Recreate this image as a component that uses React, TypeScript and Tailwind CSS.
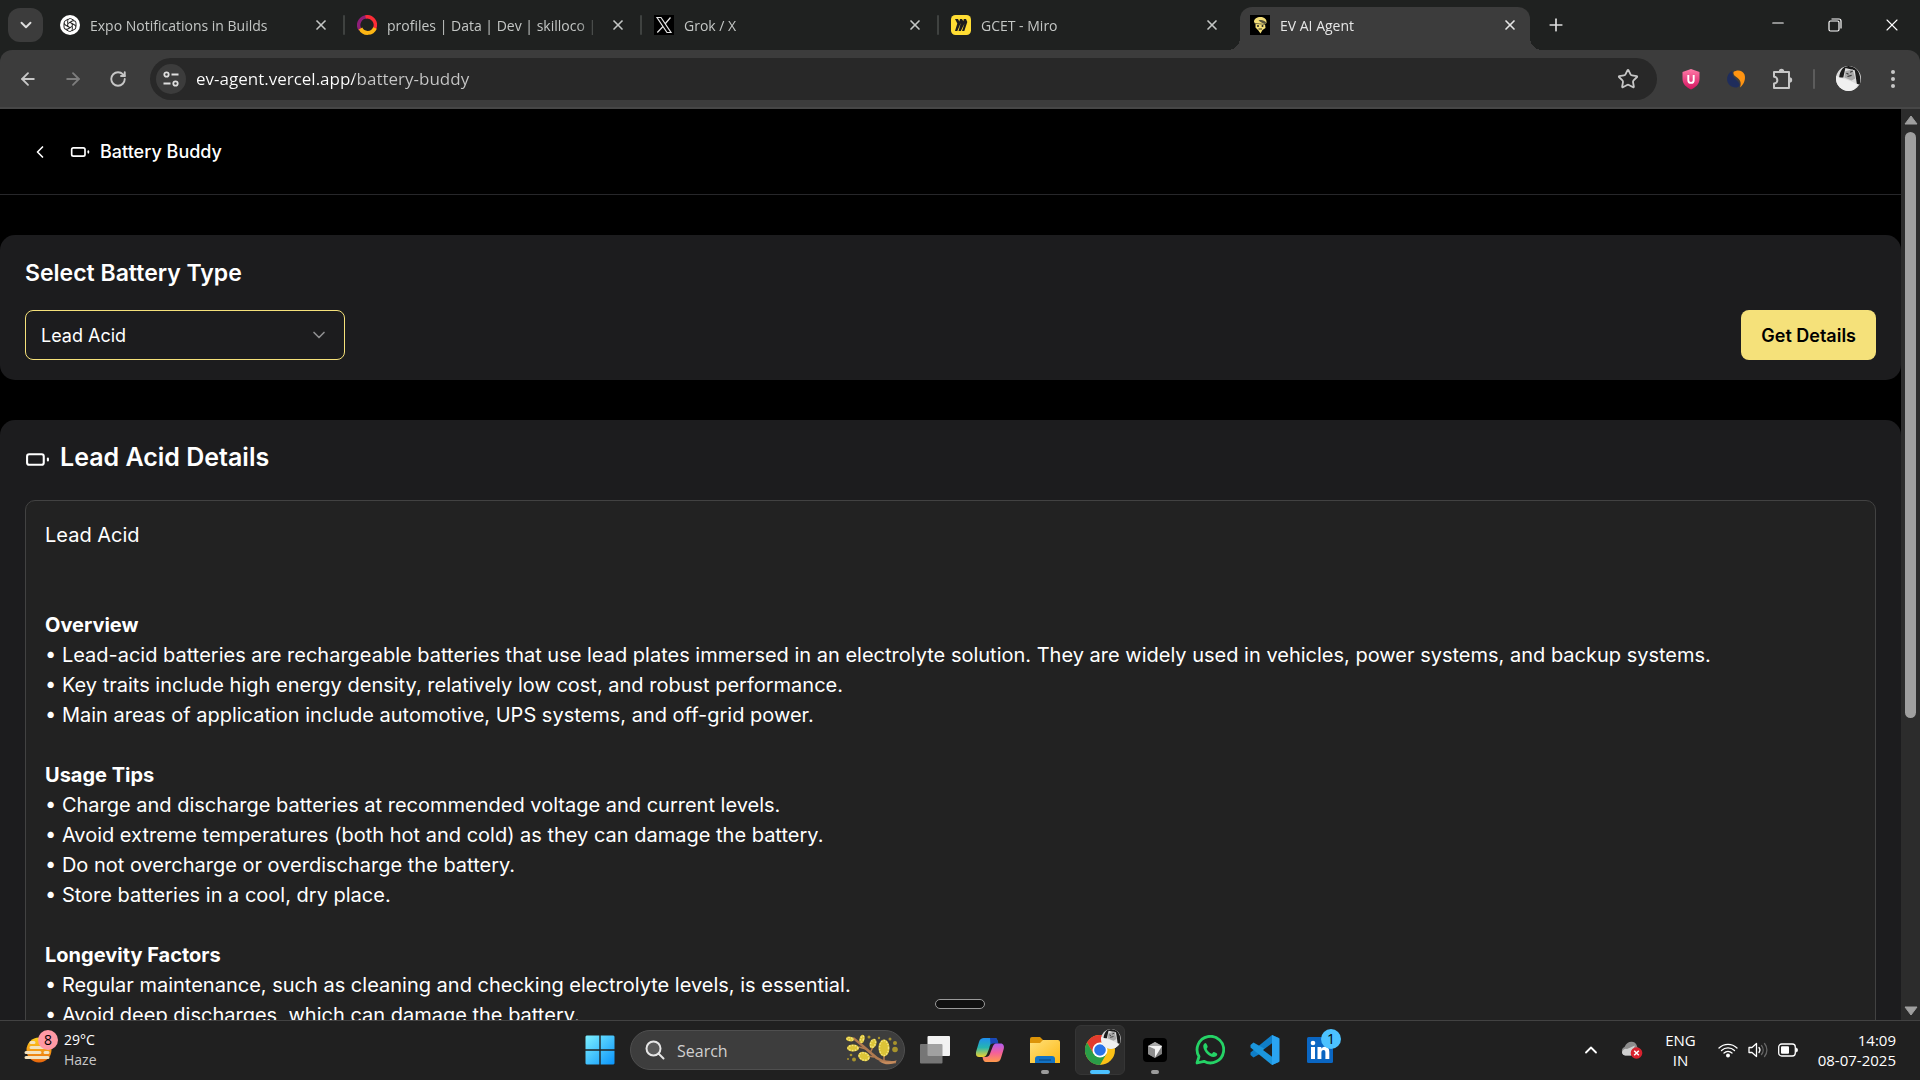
import React from "react";
import { ArrowLeft, ArrowRight, ChevronDown, ChevronLeft, ChevronUp, Minus, Plus, RotateCw, Star, X } from "lucide-react";

function OpenAiIcon() {
  return (
    <svg viewBox="0 0 20 20" className="size-5">
      <circle cx="10" cy="10" r="10" fill="#fff" />
      <g fill="none" stroke="#222" strokeWidth="1">
        {[0, 60, 120, 180, 240, 300].map((a) => (
          <path key={a} transform={`rotate(${a} 10 10)`} d="M10 7.4 L7.7 8.7 V5.6 A2.5 2.5 0 0 1 11.6 4 L14.2 5.5" />
        ))}
      </g>
    </svg>
  );
}

function RingIcon() {
  return (
    <svg viewBox="0 0 20 20" className="size-5" fill="none" strokeWidth="3.400">
      <path d="M10.500 1.900A8.200 8.200 0 0 0 3 14.500" stroke="#8e1f78" />
      <path d="M8.500 1.900A8.200 8.200 0 0 1 17.500 13.500" stroke="#fb2c36" />
      <path d="M3.500 13.500A8 8 0 0 0 18 13" stroke="#fcb614" strokeWidth="4" />
    </svg>
  );
}

function XLogo() {
  return (
    <svg viewBox="0 0 20 20" className="size-5">
      <rect width="20" height="20" fill="#000" />
      <path d="M3 2.500H7L17 17.500H13Z M16.500 2.500L11 9M9 11.500L3.300 17.500" fill="none" stroke="#e4e4e4" strokeWidth="1.200" />
    </svg>
  );
}

function MiroIcon() {
  return (
    <svg viewBox="0 0 20 20" className="size-5">
      <rect width="20" height="20" rx="4.500" fill="#ffdd33" />
      <path
        d="M4 4H7L8.300 6.500L9 4H11L12.300 6.200L12.800 4H15L16.300 7L13.300 16H11L13.500 8.500L9.800 16H7.500L9.800 8L6.300 16H4L6.300 8.500Z"
        fill="#1c1c1e"
      />
    </svg>
  );
}

function AgentIcon() {
  return (
    <svg viewBox="0 0 20 20" className="size-5">
      <rect width="20" height="20" fill="#000" />
      <path d="M4 7C4 3.500 7 2 10.500 2C14.500 2 17 4.500 16.500 8L15 9L15.500 13L12.500 15L10.500 18.500L8 15L5.500 12.500L5.500 9Z" fill="#f3de78" />
      <path d="M8.500 5.500C11 4.500 14.500 5 16.300 8L15 9C13 8.500 11 7.500 8.500 5.500Z" fill="#55523c" />
      <path d="M4.500 8.500C8 8.500 11 9 15 9.500" stroke="#55523c" strokeWidth=".8" fill="none" />
      <circle cx="8" cy="11" r="1" fill="#222" />
      <circle cx="12.500" cy="11" r="1" fill="#222" />
      <path d="M8.500 14H12" stroke="#222" strokeWidth=".9" />
    </svg>
  );
}

function Avatar({ className }: { className: string }) {
  return (
    <svg viewBox="0 0 24 24" className={className}>
      <defs>
        <clipPath id="face">
          <circle cx="12" cy="12" r="12" />
        </clipPath>
      </defs>
      <g clipPath="url(#face)">
        <rect width="24" height="24" fill="#dcdcdc" />
        <path d="M3 11C4 4 7 0 12 0C19 0 25 6 23 18L20 17L18 4L9 2L7 11Z" fill="#1c1c1c" />
        <path d="M9 5L16 3L18.500 12L15 14L8 11Z" fill="#a8a8a8" />
        <path d="M10 7L12 8M13.500 6L16 5M11 10L15 9" stroke="#333" strokeWidth="1" />
        <path d="M0 9C3 12 12 12 21 18L17 24H0Z" fill="#f0f0f0" />
      </g>
    </svg>
  );
}

function SiteInfoIcon() {
  return (
    <svg viewBox="0 0 18 18" className="size-[18px]" fill="none" stroke="#dedede" strokeWidth="1.800">
      <circle cx="4.500" cy="4.500" r="2.200" />
      <path d="M9.500 4.500H16.500M1.500 13.500H8.500" />
      <circle cx="13.500" cy="13.500" r="2.200" />
    </svg>
  );
}

function ShieldIcon() {
  return (
    <svg viewBox="0 0 20 22" className="h-[22px] w-5">
      <defs>
        <linearGradient id="shield" x1="0" y1="0" x2="0" y2="1">
          <stop offset="0" stopColor="#ff7aa8" />
          <stop offset="1" stopColor="#d4145f" />
        </linearGradient>
      </defs>
      <path d="M10 1L18.500 4V11C18.500 16 14.500 19.500 10 21.500C5.500 19.500 1.500 16 1.500 11V4Z" fill="url(#shield)" />
      <path d="M7.300 7V12.200A2.700 2.700 0 0 0 12.700 12.200V7" fill="none" stroke="#fff" strokeWidth="1.900" />
    </svg>
  );
}

function SwirlIcon() {
  return (
    <svg viewBox="0 0 20 20" className="size-5">
      <path d="M6 2C.5 5 -.5 12 3.500 16C6.500 19 12 19.500 13.500 16.500C14.500 13 8.500 10.500 7 7C6.300 5 6.500 3 6 2Z" fill="#1f2d5c" />
      <path d="M7.500 3C11 .5 16.500 1 18.500 5.500C20 10 18 15.500 14 18.500C15.500 14 14.500 11 11 8.500C8.500 7 7 5.500 7.500 3Z" fill="#ff9412" />
    </svg>
  );
}

function PuzzleIcon() {
  return (
    <svg viewBox="0 0 24 24" className="size-6">
      <path d="M4 5H19V21H4V16.500A3.300 3.300 0 0 0 4 9.800Z" fill="none" stroke="#c7c7c7" strokeWidth="2" strokeLinejoin="round" />
      <path d="M8.800 4.500A2.700 2.700 0 0 1 14.200 4.500ZM19.500 10.300A2.700 2.700 0 0 1 19.500 15.700Z" fill="#c7c7c7" />
    </svg>
  );
}

function BatteryIcon({ className }: { className: string }) {
  return (
    <svg viewBox="0 0 24 24" className={className} fill="none" stroke="#fff" strokeWidth="2" strokeLinecap="round">
      <rect x="2" y="7" width="16" height="10" rx="2" />
      <path d="M22 11V13" />
    </svg>
  );
}

function HazeIcon() {
  return (
    <svg viewBox="0 0 32 32" className="size-8">
      <defs>
        <linearGradient id="sun" x1="0" y1="0" x2="0" y2="1">
          <stop offset="0" stopColor="#ffd21f" />
          <stop offset="1" stopColor="#e8660c" />
        </linearGradient>
      </defs>
      <circle cx="15" cy="16" r="12.500" fill="url(#sun)" />
      <g stroke="#f3e3c0" strokeWidth="3" strokeLinecap="round">
        <path d="M7 8.500H10M7 13.500H25M2 18.500H16M21 18.500H24M2 23.500H24" />
      </g>
    </svg>
  );
}

function WindowsIcon() {
  return (
    <svg viewBox="0 0 30 30" className="size-[30px]">
      <defs>
        <linearGradient id="win" x1="0" y1="0" x2="1" y2="1">
          <stop offset="0" stopColor="#7df0ff" />
          <stop offset="1" stopColor="#0a94fb" />
        </linearGradient>
      </defs>
      <path d="M1.500 .5H14.300V14.300H.5V1.500ZM15.700 .5H28.500L29.500 1.500V14.300H15.700ZM.5 15.700H14.300V29.500H1.500L.5 28.500ZM15.700 15.700H29.500V28.500L28.500 29.500H15.700Z" fill="url(#win)" />
    </svg>
  );
}

function BranchArt() {
  const pods: number[][] = [
    [4, 5, 4, 2.3, 10], [16, 5, 2.5, 4.2, 15], [7, 14, 6, 3.6, 0], [27, 9.5, 3.3, 5, 20], [18, 22.5, 6, 4.5, 20], [38, 14, 5.5, 8.5, 0],
  ];
  const dots: number[][] = [[23, 3, 1.5], [44, 5, 1.5], [49, 9, 2], [49, 15.5, 2.8], [8, 25.5, 2], [2, 25, 1], [33, 4, 1.2], [5, 21, 1.3]];
  return (
    <svg viewBox="0 0 54 32" className="h-8 w-[54px]">
      <g fill="none" stroke="#b07a50" strokeWidth="1.500">
        <path d="M7 4C14 9 20 15 26 20C32 26 38 29 50 28" strokeWidth="2.600" />
        <path d="M24 19L27 13M13 13L20 15M38 27V20M22 22L28 23" />
      </g>
      <path d="M33 27C39 28 44 28 51 26.500C48 31 39 32 33 27Z" fill="#c58b5d" />
      {pods.map(([cx, cy, rx, ry, a], i) => (
        <g key={i} transform={`rotate(${a} ${cx} ${cy})`}>
          <ellipse cx={cx} cy={cy} rx={rx} ry={ry} fill="#dcc437" />
          <ellipse cx={cx} cy={cy} rx={rx - 1} ry={ry - 1} fill="none" stroke="#f6e685" strokeWidth="1.400" strokeDasharray="1.400 1.400" />
        </g>
      ))}
      {dots.map(([cx, cy, r], i) => (
        <circle key={i} cx={cx} cy={cy} r={r} fill="#a8932c" />
      ))}
    </svg>
  );
}

function TaskViewIcon() {
  return (
    <svg viewBox="0 0 30 30" className="size-[30px]">
      <rect x="7.500" y="1" width="22.500" height="20" rx="1" fill="#f2f2f2" />
      <rect x="0" y="9" width="22.500" height="19.500" rx="1" fill="#8c8c8c" fillOpacity=".8" />
    </svg>
  );
}

function CopilotIcon() {
  return (
    <svg viewBox="0 0 30 30" className="size-[30px]">
      <defs>
        <linearGradient id="copL" x1="0" y1="0" x2="0" y2="1">
          <stop offset="0" stopColor="#1f8df0" />
          <stop offset=".5" stopColor="#26b5b0" />
          <stop offset="1" stopColor="#f3d22c" />
        </linearGradient>
        <linearGradient id="copR" x1="0" y1="0" x2="0" y2="1">
          <stop offset="0" stopColor="#b05cf0" />
          <stop offset=".5" stopColor="#f4609a" />
          <stop offset="1" stopColor="#ff9a4a" />
        </linearGradient>
      </defs>
      <path d="M9 3H20C22 3 22.500 5 23 8H18C15 8 15 11 14 14L12 19C11 21 10 22 8 22H4C1 22 .5 19 1.300 16L4 7C5 4 6.500 3 9 3Z" fill="url(#copL)" />
      <path d="M15 3H20C22 3 22.500 5 23.500 8.500H18.500C16.500 8.500 16 9 15.500 10Z" fill="#1a48b8" />
      <path d="M21 27H11C9 27 8 25 7.500 22H11C14 22 15 19 16 16L18 11C19 9 20 8.500 22 8.500H25.500C28.500 8.500 29.500 11 28.700 14L26 23C25 26 23.500 27 21 27Z" fill="url(#copR)" />
    </svg>
  );
}

function FolderIcon() {
  return (
    <svg viewBox="0 0 30 30" className="size-[30px]">
      <defs>
        <linearGradient id="fold" x1="0" y1="0" x2="1" y2="1">
          <stop offset="0" stopColor="#ffe07a" />
          <stop offset="1" stopColor="#fdb915" />
        </linearGradient>
      </defs>
      <path d="M0 4A2 2 0 0 1 2 2H10L13 5V8H0Z" fill="#dc9408" />
      <path d="M0 8H10L13 5H28A2 2 0 0 1 30 7V28H0Z" fill="url(#fold)" />
      <path d="M5 28V24A3 3 0 0 1 8 21H22A3 3 0 0 1 25 24V28Z" fill="#1272c4" />
      <path d="M9 25H21" stroke="#0a4a86" strokeWidth="1.200" />
    </svg>
  );
}

function ChromeIcon() {
  return (
    <svg viewBox="0 0 30 30" className="size-[30px]">
      <circle cx="15" cy="15" r="15" fill="#fbc116" />
      <path d="M2 7.500A15 15 0 0 1 28 7.500H15L8.500 18.700Z" fill="#e33b2e" />
      <path d="M2 7.500A15 15 0 0 0 15 30L21.500 18.700L8.500 18.700Z" fill="#2a9d48" />
      <circle cx="15" cy="15" r="7.500" fill="#fff" />
      <circle cx="15" cy="15" r="5.800" fill="#2a73e8" />
    </svg>
  );
}

function CursorIcon() {
  return (
    <svg viewBox="0 0 24 24" className="size-6">
      <rect width="24" height="24" rx="4" fill="#000" />
      <path d="M12 4L19 8V16L12 20L5 16V8Z" fill="#7f7f7f" />
      <path d="M12 4L19 8L12 12L5 8Z" fill="#a9a9a9" />
      <path d="M5 8L12 12V20L5 16Z" fill="#8f8f8f" />
      <path d="M5 8H19L12 19.500V11Z" fill="#f4f4f4" />
    </svg>
  );
}

function WhatsAppIcon() {
  return (
    <svg viewBox="0 0 30 30" className="size-[30px]">
      <path d="M2 28L4 21.500A13.300 13.300 0 1 1 9 26.300Z" fill="none" stroke="#25d366" strokeWidth="2.800" strokeLinejoin="round" />
      <path d="M10.500 8C9 8.500 8 10 8.300 12C9 17 14 21.500 18.500 22C20.500 22 22 21 22.300 19.200C22.300 18.300 19.500 17 18.700 17C18 17 17.500 18.700 16.700 18.700C14.500 18 12.500 16 11.700 14C11.500 13.300 12.800 12.500 12.700 11.700C12.300 10.500 11.500 8 10.500 8Z" fill="#25d366" />
    </svg>
  );
}

function VsCodeIcon() {
  return (
    <svg viewBox="0 0 30 30" className="size-[30px]">
      <path d="M22 0L29 3V8L3.500 22.500L.5 20V17.500Z" fill="#0f7ec8" />
      <path d="M22 30L29 27V22L3.500 7.500L.5 10V12.500Z" fill="#1b96dd" />
      <path d="M22 0L29.500 3.500V26.500L22 30Z" fill="#2aa4f2" />
      <path d="M22 8.300V21.700L13 15Z" fill="#202020" />
    </svg>
  );
}

function LinkedInIcon() {
  return (
    <svg viewBox="0 0 26 26" className="size-[26px]">
      <rect width="26" height="26" rx="1.500" fill="#0a66c2" />
      <circle cx="6" cy="6" r="2.300" fill="#fff" />
      <path d="M4 10H8V22H4ZM10.500 10H14.300V11.700C15.300 10.200 16.500 9.700 18 9.700C21.300 9.700 22.300 12 22.300 15V22H18.400V15.700C18.400 14 18 13 16.600 13C15 13 14.400 14.200 14.400 15.800V22H10.500Z" fill="#fff" />
    </svg>
  );
}

function CloudErrorIcon() {
  return (
    <svg viewBox="0 0 22 18" className="h-[18px] w-[22px]">
      <path d="M4.500 14.500A4.500 4.500 0 0 1 3.500 6C5.500 2 8 .5 11 .8C14 1 16 3.500 16 5.500L18 9V14.500Z" fill="#8d8d8d" />
      <path d="M1 12A4 4 0 0 1 6 8L14 4.500L10 14.500H4A3.500 3.500 0 0 1 1 12Z" fill="#cfcfcf" />
      <circle cx="15.500" cy="12" r="5.800" fill="#d8222e" />
      <path d="M13.200 9.700L17.800 14.300M17.800 9.700L13.200 14.300" stroke="#fff" strokeWidth="1.500" />
    </svg>
  );
}

function WifiIcon() {
  return (
    <svg viewBox="0 0 20 16" className="h-4 w-5" fill="none" stroke="#fff" strokeWidth="1.300" strokeLinecap="round">
      <path d="M1 6A13 13 0 0 1 19 6M3.500 8.500A9.500 9.500 0 0 1 16.500 8.500M6 11A6 6 0 0 1 14 11" />
      <circle cx="10" cy="13.500" r="1.300" fill="#fff" />
    </svg>
  );
}

function VolumeIcon() {
  return (
    <svg viewBox="0 0 20 16" className="h-4 w-5" fill="none" stroke="#fff" strokeWidth="1.300" strokeLinejoin="round" strokeLinecap="round">
      <path d="M1 5.500H4L8.500 1.500V14.500L4 10.500H1Z" />
      <path d="M11 5.500A4 4 0 0 1 11 10.500" />
      <path d="M13.500 3.500A7 7 0 0 1 13.500 12.500M16.500 1.500A10 10 0 0 1 16.500 14.500" stroke="#666" />
    </svg>
  );
}

function TrayBatteryIcon() {
  return (
    <svg viewBox="0 0 20 14" className="h-[14px] w-5">
      <rect x=".7" y="1" width="16.600" height="12" rx="3" fill="none" stroke="#fff" strokeWidth="1.300" />
      <rect x="3" y="3.300" width="8" height="7.400" rx="1" fill="#fff" />
      <path d="M18 5V9C19.200 9 19.800 8 19.800 7S19.200 5 18 5Z" fill="#fff" stroke="#fff" strokeWidth=".5" />
    </svg>
  );
}

function Tab({ icon, title, active, divider }: { icon: React.ReactNode; title: string; active?: boolean; divider?: boolean }) {
  return (
    <div
      className={
        active
          ? "relative mt-[7px] ml-1 flex h-[43px] w-[290px] min-w-0 items-center gap-[10px] rounded-t-xl bg-[#3c3c3c] pr-3 pb-[7px] pl-[10px] text-[#e6e6e6]"
          : "relative flex h-[50px] w-[297px] min-w-0 items-center gap-[10px] pr-4 pl-3 text-[#c4c7c5]"
      }
    >
      <span className="shrink-0">{icon}</span>
      <span className="w-0 flex-1 overflow-hidden pt-px text-sm whitespace-nowrap [mask-image:linear-gradient(to_right,#000_calc(100%-24px),transparent)]">
        {title}
      </span>
      <button type="button" aria-label={`Close ${title}`} className="flex size-4 shrink-0 items-center justify-center">
        <X className="size-4" strokeWidth={2.5} />
      </button>
      {divider && <span className="absolute top-[15px] right-0 h-5 w-0.5 rounded bg-[#3f4240]" />}
      {active && (
        <>
          <span className="absolute bottom-0 -left-3 size-3 bg-[radial-gradient(circle_at_0_0,transparent_12px,#3c3c3c_12px)]" />
          <span className="absolute -right-3 bottom-0 size-3 bg-[radial-gradient(circle_at_100%_0,transparent_12px,#3c3c3c_12px)]" />
        </>
      )}
    </div>
  );
}

function TabStrip() {
  return (
    <div className="flex h-[50px] bg-[#1f2120]">
      <button type="button" aria-label="Search tabs" className="mt-2 mr-[5px] ml-2 flex h-[34px] w-[35px] shrink-0 items-center justify-center rounded-xl bg-[#3c3c3c] text-[#dedede]">
        <ChevronDown className="size-[18px]" strokeWidth={2.500} />
      </button>
      <Tab icon={<OpenAiIcon />} title="Expo Notifications in Builds" divider />
      <Tab icon={<RingIcon />} title="profiles | Data | Dev | skilloco | Cloud" divider />
      <Tab icon={<XLogo />} title="Grok / X" divider />
      <Tab icon={<MiroIcon />} title="GCET - Miro" />
      <Tab icon={<AgentIcon />} title="EV AI Agent" active />
      <button type="button" aria-label="New tab" className="ml-4 flex w-5 shrink-0 items-center justify-center text-[#dedede]">
        <Plus className="size-5" strokeWidth={2} />
      </button>
      <div className="ml-auto flex shrink-0 text-white">
        <button type="button" aria-label="Minimize" className="flex w-[57px] items-center justify-center pb-1">
          <Minus className="size-[18px]" strokeWidth={1.500} />
        </button>
        <button type="button" aria-label="Restore" className="flex w-[57px] items-center justify-center">
          <svg viewBox="0 0 14 14" className="size-[14px]" fill="none" stroke="#fff" strokeWidth="1.200">
            <rect x="1" y="3" width="10" height="10" rx="1.500" />
            <path d="M3.500 1H11A2 2 0 0 1 13 3V10.500" />
          </svg>
        </button>
        <button type="button" aria-label="Close window" className="flex w-[57px] items-center justify-center">
          <X className="size-5" strokeWidth={1.300} />
        </button>
      </div>
    </div>
  );
}

function Toolbar() {
  return (
    <div className="bg-[#1f2120]">
      <div className="flex h-[59px] items-center rounded-t-xl border-b-2 border-[#474747] bg-[#3c3c3c] pl-4 text-[#c7c7c7]">
        <button type="button" aria-label="Back" className="mr-[21px] shrink-0">
          <ArrowLeft className="size-6 px-0.5" strokeWidth={2.200} />
        </button>
        <button type="button" aria-label="Forward" className="mr-[21px] shrink-0 text-[#7d7d7d]">
          <ArrowRight className="size-6 px-0.5" strokeWidth={2.200} />
        </button>
        <button type="button" aria-label="Reload" className="mr-5 shrink-0">
          <RotateCw className="size-6 p-[3px]" strokeWidth={2.500} />
        </button>
        <div className="flex h-[42px] min-w-0 flex-1 items-center rounded-full bg-[#282828] pr-[18px] pl-[6px]">
          <button type="button" aria-label="Site information" className="flex size-[30px] shrink-0 items-center justify-center rounded-full bg-[#3c3c3c]">
            <SiteInfoIcon />
          </button>
          <input
            aria-label="Address"
            defaultValue="ev-agent.vercel.app/battery-buddy"
            className="ml-[10px] min-w-0 flex-1 bg-[linear-gradient(to_right,#ffffff_158px,#c7c7c7_158px)] bg-clip-text pt-px text-[17px] text-transparent outline-none"
          />
          <button type="button" aria-label="Bookmark this tab">
            <Star className="size-[22px]" strokeWidth={2} />
          </button>
        </div>
        <div className="ml-6 flex shrink-0 items-center">
          <button type="button" aria-label="Shield extension"><ShieldIcon /></button>
          <button type="button" aria-label="Swirl extension" className="ml-[25px]"><SwirlIcon /></button>
          <button type="button" aria-label="Extensions" className="ml-6"><PuzzleIcon /></button>
          <span className="ml-[19px] h-5 w-0.5 rounded bg-[#5c5c5c]" />
          <button type="button" aria-label="Profile" className="ml-[21px]"><Avatar className="size-[25px]" /></button>
          <button type="button" aria-label="Menu" className="mr-[17px] ml-[22px]">
            <svg viewBox="0 0 20 20" className="size-5" fill="#c7c7c7">
              <circle cx="10" cy="3" r="2" />
              <circle cx="10" cy="10" r="2" />
              <circle cx="10" cy="17" r="2" />
            </svg>
          </button>
        </div>
      </div>
    </div>
  );
}

const sections = [
  {
    title: "Overview",
    items: [
      "Lead-acid batteries are rechargeable batteries that use lead plates immersed in an electrolyte solution. They are widely used in vehicles, power systems, and backup systems.",
      "Key traits include high energy density, relatively low cost, and robust performance.",
      "Main areas of application include automotive, UPS systems, and off-grid power.",
    ],
  },
  {
    title: "Usage Tips",
    items: [
      "Charge and discharge batteries at recommended voltage and current levels.",
      "Avoid extreme temperatures (both hot and cold) as they can damage the battery.",
      "Do not overcharge or overdischarge the battery.",
      "Store batteries in a cool, dry place.",
    ],
  },
  {
    title: "Longevity Factors",
    items: [
      "Regular maintenance, such as cleaning and checking electrolyte levels, is essential.",
      "Avoid deep discharges, which can damage the battery.",
    ],
  },
];

function BatteryPage() {
  return (
    <main className="h-full min-w-0 flex-1 overflow-hidden bg-black font-['Inter',sans-serif] text-white">
      <header className="flex h-[86px] items-center border-b border-[#27272a] pl-5">
        <button type="button" aria-label="Go back" className="flex size-10 items-center justify-center">
          <ChevronLeft className="size-5" strokeWidth={2} />
        </button>
        <h1 className="ml-[10px] flex items-center gap-[10px] text-lg font-medium">
          <BatteryIcon className="size-5" />
          Battery Buddy
        </h1>
      </header>
      <section className="mt-10 rounded-[15px] bg-[#1c1c1e] px-[25px] pt-[22px] pb-5">
        <h2 className="text-[23px] leading-8 font-semibold">
          <label htmlFor="battery-type">Select Battery Type</label>
        </h2>
        <div className="mt-[21px] flex items-center justify-between">
          <div className="relative w-80">
            <select id="battery-type" className="h-[50px] w-full appearance-none rounded-lg border border-[#f5e17a] bg-[#1c1c1e] px-[15px] pt-px text-lg outline-none">
              <option>Lead Acid</option>
            </select>
            <ChevronDown className="pointer-events-none absolute top-[15px] right-4 size-5 text-[#8e8e90]" strokeWidth={2} />
          </div>
          <button type="button" className="h-[50px] rounded-lg bg-[#f5e17a] px-5 pt-px text-lg font-semibold text-black">Get Details</button>
        </div>
      </section>
      <section className="mt-10 rounded-[15px] bg-[#1c1c1e] px-[25px] pt-5 pb-[25px]">
        <h2 className="flex h-[35px] items-center gap-[10px] text-[25px] font-semibold">
          <BatteryIcon className="mt-1 size-[25px]" />
          Lead Acid Details
        </h2>
        <article className="mt-[25px] rounded-[10px] border border-[#424242] bg-[#222222] p-[19px] text-xl leading-[30px]">
          <p className="mb-[60px]">Lead Acid</p>
          {sections.map((s) => (
            <div key={s.title} className="mb-[30px]">
              <h3 className="font-bold">{s.title}</h3>
              <ul>
                {s.items.map((item) => (
                  <li key={item}>• {item}</li>
                ))}
              </ul>
            </div>
          ))}
        </article>
      </section>
    </main>
  );
}

function Scrollbar() {
  return (
    <div aria-hidden="true" className="flex w-[19px] shrink-0 flex-col items-center bg-[#2c2c2c]">
      <svg viewBox="0 0 14 10" className="mt-[6px] h-[10px] w-[14px]">
        <path d="M7 1L13 9H1Z" fill="#9f9f9f" stroke="#9f9f9f" strokeLinejoin="round" />
      </svg>
      <div className="mt-[7px] flex w-full flex-1 flex-col items-center">
        <div className="h-[67%] w-[11px] rounded-full bg-[#9f9f9f]" />
      </div>
      <svg viewBox="0 0 14 10" className="mb-1 h-[10px] w-[14px]">
        <path d="M7 9L13 1H1Z" fill="#9f9f9f" stroke="#9f9f9f" strokeLinejoin="round" />
      </svg>
    </div>
  );
}

function TaskButton({ label, children, active, running }: { label: string; children: React.ReactNode; active?: boolean; running?: boolean }) {
  return (
    <button
      type="button"
      aria-label={label}
      className={
        active
          ? "relative flex size-[50px] items-center justify-center rounded-md border border-[#353535] bg-[#2d2d2d]"
          : "relative flex size-[50px] items-center justify-center"
      }
    >
      {children}
      {active && <span className="absolute bottom-0 h-1 w-5 rounded-full bg-[#4cc2ff]" />}
      {running && <span className="absolute bottom-px h-1 w-2 rounded-full bg-[#9b9b9b]" />}
    </button>
  );
}

function Taskbar() {
  return (
    <footer className="grid h-[60px] shrink-0 grid-cols-[1fr_auto_1fr] items-center border-t border-[#424242] bg-[#202020] pb-px text-white">
      <button type="button" className="flex items-center gap-2 pl-6 text-left">
        <span className="relative">
          <HazeIcon />
          <span className="absolute -top-1 -right-0.5 flex size-5 items-center justify-center rounded-full bg-[#ff99a4] text-sm text-black">8</span>
        </span>
        <span className="text-sm leading-5">
          <span className="block">29°C</span>
          <span className="block text-[#c8c8c8]">Haze</span>
        </span>
      </button>
      <nav aria-label="Taskbar" className="flex items-center gap-[5px]">
        <TaskButton label="Start"><WindowsIcon /></TaskButton>
        <label className="flex h-10 w-[275px] items-center rounded-full border border-[#4f4f4f] bg-[#3d3d3d] pr-1 pl-[14px]">
          <svg viewBox="0 0 20 20" className="size-5 shrink-0" fill="none" stroke="#e6e6e6" strokeWidth="2" strokeLinecap="round">
            <circle cx="8.500" cy="8.500" r="7" fill="#5a5a5a" />
            <path d="M13.500 13.500L18.500 18.500" />
          </svg>
          <input aria-label="Search" placeholder="Search" className="ml-3 min-w-0 flex-1 bg-transparent pt-px text-base outline-none placeholder:text-[#d0d0d0]" />
          <BranchArt />
        </label>
        <TaskButton label="Task view"><TaskViewIcon /></TaskButton>
        <TaskButton label="Copilot"><CopilotIcon /></TaskButton>
        <TaskButton label="File Explorer" running><FolderIcon /></TaskButton>
        <TaskButton label="Chrome" active>
          <ChromeIcon />
          <span className="absolute top-[3px] right-[3px]"><Avatar className="size-5" /></span>
        </TaskButton>
        <TaskButton label="Cursor" running><CursorIcon /></TaskButton>
        <TaskButton label="WhatsApp"><WhatsAppIcon /></TaskButton>
        <TaskButton label="Visual Studio Code"><VsCodeIcon /></TaskButton>
        <TaskButton label="LinkedIn">
          <LinkedInIcon />
          <span className="absolute top-1 right-1 flex size-5 items-center justify-center rounded-full bg-[#4cc2ff] text-sm text-black">1</span>
        </TaskButton>
      </nav>
      <div className="flex items-center justify-end pr-6 text-[15px] leading-5">
        <button type="button" aria-label="Show hidden icons"><ChevronUp className="size-5" strokeWidth={2.200} /></button>
        <span className="ml-5"><CloudErrorIcon /></span>
        <button type="button" className="ml-[22px] text-center">
          <span className="block">ENG</span>
          <span className="block">IN</span>
        </button>
        <span className="ml-[22px]"><WifiIcon /></span>
        <span className="ml-[10px]"><VolumeIcon /></span>
        <span className="ml-[10px]"><TrayBatteryIcon /></span>
        <time className="ml-5 text-right">
          <span className="block">14:09</span>
          <span className="block">08-07-2025</span>
        </time>
      </div>
    </footer>
  );
}

export default function App() {
  return (
    <div className="flex h-screen flex-col overflow-hidden bg-black font-['Open_Sans',sans-serif]">
      <TabStrip />
      <Toolbar />
      <div className="relative flex min-h-0 flex-1">
        <BatteryPage />
        <Scrollbar />
        <span className="absolute bottom-[11px] left-1/2 h-[10px] w-[50px] -translate-x-1/2 rounded-full border border-[#9a9a9a] bg-[#101010]" />
      </div>
      <Taskbar />
    </div>
  );
}
